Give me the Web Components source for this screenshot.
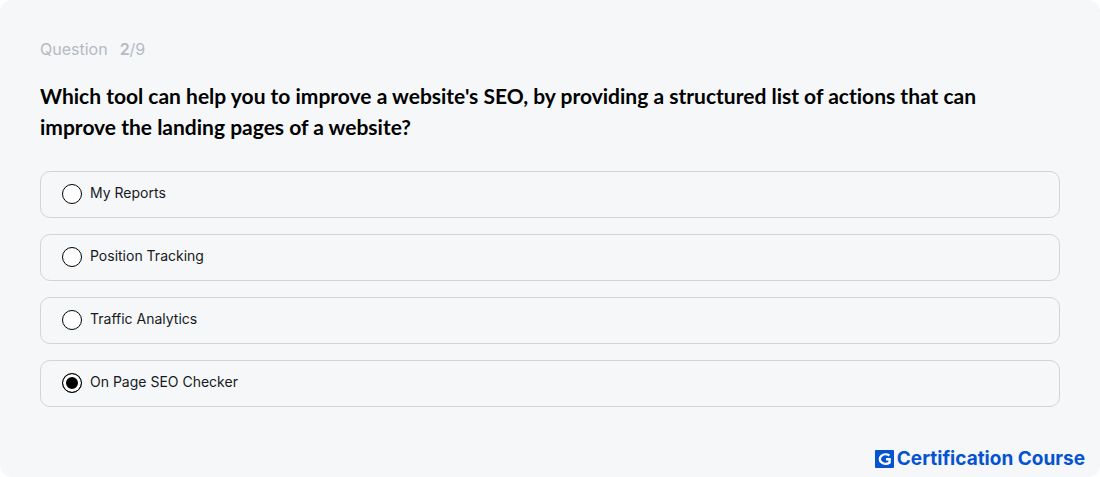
<!DOCTYPE html>
<html lang="en">
<head>
    <meta charset="utf-8">
    <meta name="viewport" content="width=device-width, initial-scale=1">
    <title>Certification Course</title>
    <style>
        body {
            margin: 0;
            background: #fff;
            font-family: Inter, "Liberation Sans", sans-serif;
        }
    </style>
</head>
<body>
    <quiz-card>
        <quiz-progress slot="progress" current="2" total="9"></quiz-progress>
        <span slot="title">Which tool can help you to improve a website's SEO, by providing a structured list of actions that can improve the landing pages of a website?</span>
        <quiz-option>
            <input slot="control" type="radio" name="answer" id="reports">
            <label slot="label" for="reports">My Reports</label>
        </quiz-option>
        <quiz-option>
            <input slot="control" type="radio" name="answer" id="tracking">
            <label slot="label" for="tracking">Position Tracking</label>
        </quiz-option>
        <quiz-option>
            <input slot="control" type="radio" name="answer" id="traffic">
            <label slot="label" for="traffic">Traffic Analytics</label>
        </quiz-option>
        <quiz-option>
            <input slot="control" type="radio" name="answer" id="checker" checked>
            <label slot="label" for="checker">On Page SEO Checker</label>
        </quiz-option>
        <course-brand slot="brand">Certification Course</course-brand>
    </quiz-card>

    <script>
        class QuizCard extends HTMLElement {
            constructor() {
                super();
                this.attachShadow({ mode: "open" });
                this.render();
            }

            render() {
                this.shadowRoot.innerHTML = `
                    <style>
                        :host {
                            display: flex;
                            flex-direction: column;
                            box-sizing: border-box;
                            min-height: 100vh;
                            padding: 39px 40px 7px;
                            border-radius: 12px;
                            background: #f5f7f9;
                        }

                        h1 {
                            margin: 21px 0 29px;
                            padding-right: 40px;
                            color: #000;
                            font-family: Lato, Inter, sans-serif;
                            font-size: 21px;
                            font-weight: 700;
                            font-variant-ligatures: none;
                            line-height: 31px;
                        }

                        .options {
                            display: flex;
                            flex-direction: column;
                            gap: 16px;
                        }

                        footer {
                            display: flex;
                            justify-content: flex-end;
                            margin: auto -25px 0 0;
                        }
                    </style>

                    <slot name="progress"></slot>
                    <h1 id="title"><slot name="title"></slot></h1>
                    <div class="options" role="radiogroup" aria-labelledby="title">
                        <slot></slot>
                    </div>
                    <footer><slot name="brand"></slot></footer>
                `;
            }
        }

        class QuizProgress extends HTMLElement {
            constructor() {
                super();
                this.attachShadow({ mode: "open" });
            }

            connectedCallback() {
                this.render();
            }

            render() {
                this.shadowRoot.innerHTML = `
                    <style>
                        :host {
                            display: flex;
                            gap: 12px;
                            color: #b5bac2;
                            font-size: 16px;
                            line-height: 20px;
                        }

                        b {
                            font-weight: 600;
                        }
                    </style>

                    <span>Question</span>
                    <span><b>${this.getAttribute("current")}</b>/${this.getAttribute("total")}</span>
                `;
            }
        }

        // The radio stays in the light DOM so that options with the same name form one group
        class QuizOption extends HTMLElement {
            constructor() {
                super();
                this.attachShadow({ mode: "open" });
                this.render();
            }

            render() {
                this.shadowRoot.innerHTML = `
                    <style>
                        :host {
                            display: flex;
                            align-items: flex-start;
                            padding-left: 21px;
                            border: 1px solid #d1d4db;
                            border-radius: 10px;
                        }

                        ::slotted(input) {
                            appearance: none;
                            flex: none;
                            box-sizing: border-box;
                            width: 20px;
                            height: 20px;
                            margin: 12px 0 0;
                            border: 1px solid #000;
                            border-radius: 50%;
                            background: #fff;
                            cursor: pointer;
                        }

                        ::slotted(input:checked) {
                            background: #000;
                            box-shadow: inset 0 0 0 3px #fff;
                        }

                        ::slotted(label) {
                            flex: 1;
                            padding: 11px 20px 14px 8px;
                            color: #171a22;
                            font-size: 14px;
                            line-height: 20px;
                            cursor: pointer;
                        }
                    </style>

                    <slot name="control"></slot>
                    <slot name="label"></slot>
                `;
            }
        }

        class CourseBrand extends HTMLElement {
            constructor() {
                super();
                this.attachShadow({ mode: "open" });
                this.render();
            }

            render() {
                this.shadowRoot.innerHTML = `
                    <style>
                        :host {
                            display: flex;
                            align-items: center;
                            gap: 3px;
                            color: #0553d1;
                            font-size: 19px;
                            font-weight: 700;
                            line-height: 22px;
                        }

                        svg {
                            width: 19px;
                            height: 19px;
                        }
                    </style>

                    <svg viewBox="0 0 19 19" aria-hidden="true">
                        <rect width="19" height="18" rx="1" fill="#0553d1"/>
                        <path d="M14.4 5.5A5.8 4.7 0 1 0 14.6 12.5V9.3H11" fill="none" stroke="#fff" stroke-width="2.4"/>
                    </svg>
                    <slot></slot>
                `;
            }
        }

        customElements.define("quiz-card", QuizCard);
        customElements.define("quiz-progress", QuizProgress);
        customElements.define("quiz-option", QuizOption);
        customElements.define("course-brand", CourseBrand);
    </script>
</body>
</html>
